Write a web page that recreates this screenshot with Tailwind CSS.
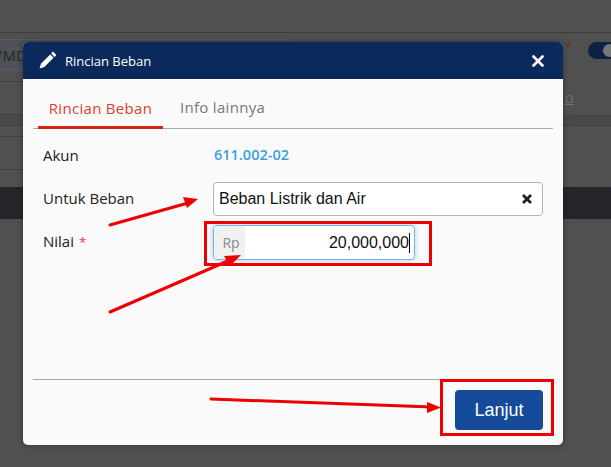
<!DOCTYPE html>
<html lang="id">
<head>
  <meta charset="UTF-8" />
  <title>Rincian Beban</title>
  <script src="https://cdn.jsdelivr.net/npm/@tailwindcss/browser@4"></script>
</head>
<body class="relative w-[611px] h-[467px] overflow-hidden bg-[#4d4d4d] font-['Open_Sans',sans-serif]">

  <!-- Halaman di balik modal -->
  <div class="h-[467px] flex flex-col bg-[#505050]">
    <div class="h-[33px] shrink-0 border-b border-[#3d3d3d]"></div>
    <div class="h-[38px] shrink-0 pt-[6px] flex">
      <div class="w-[293px] h-[32px] border-y border-r border-[#5c5c5c] rounded-tr-[5px] bg-[#4e5158] overflow-hidden">
        <div class="-ml-[6px] text-[15px] leading-[30px] whitespace-nowrap text-[#262626]">YMD</div>
      </div>
      <div class="ml-auto flex items-start pt-[1px]">
        <span class="text-[12px] leading-[16px] text-[#7a2a2a] mr-[16px]">*</span>
        <div class="w-[23px] h-[17px] mt-[2px] bg-[#0c2344] rounded-l-full pl-[15px] pt-[2px] overflow-hidden">
          <div class="w-[13px] h-[13px] rounded-full bg-[#777777]"></div>
        </div>
      </div>
    </div>
    <div class="h-[11px] shrink-0 w-[100px] border-b border-[#3f3f3f]"></div>
    <div class="h-[33px] shrink-0 w-[100px] border-b border-[#3f3f3f]"></div>
    <div class="h-[11px] shrink-0 border-b border-[#3f3f3f] bg-[#484848]"></div>
    <div class="h-[11px] shrink-0 w-[100px] border-b border-[#3f3f3f]"></div>
    <div class="h-[33px] shrink-0 w-[100px] border-b border-[#3f3f3f]"></div>
    <div class="h-[17px] shrink-0"></div>
    <div class="h-[32px] shrink-0 bg-[#25262b]"></div>
  </div>
  <span class="absolute left-[565px] top-[92px] text-[11px] leading-[14px] underline text-[#6a7a88]">O</span>

  <!-- Modal -->
  <div class="absolute left-[23px] top-[42px] w-[540px] h-[403px] bg-[#fafafa] rounded-[5px] overflow-hidden flex flex-col shadow-[0_0_6px_rgba(0,0,0,0.35)]">
    <div class="h-[37px] bg-[#0b2a5b] flex items-center pl-[16px] pr-[19px] text-white">
      <svg class="w-[18px] h-[18px] -mt-[2px]" viewBox="0 0 18 18" fill="#fff"><path d="M14 .6l3.400 3.400-1.900 1.900-3.400-3.400zM11.200 3.400l3.400 3.400-9.300 9.300L.6 17.400l1.300-4.700z"/></svg>
      <span class="ml-[8px] text-[13px] leading-[18px]">Rincian Beban</span>
      <svg class="ml-auto w-[12px] h-[12px]" viewBox="0 0 12 12" stroke="#fff" stroke-width="2.600" stroke-linecap="round"><path d="M1.500 1.500l9 9M10.500 1.500l-9 9"/></svg>
    </div>

    <div class="mx-[10px] h-[50px] flex items-end border-b border-[#ababab] pl-[5px]">
      <div class="w-[125px] h-[34px] -mb-[1px] border-b-[3px] border-[#d9230f] text-center text-[15px] tracking-[0.3px] leading-[26px] text-[#d9402c]">Rincian Beban</div>
      <div class="ml-[17px] h-[34px] text-[15px] tracking-[0.3px] leading-[26px] text-[#777777]">Info lainnya</div>
    </div>

    <div class="px-[20px] pt-[14px] flex-1 text-[15px] text-[#222222]">
      <div class="flex h-[24px] items-center">
        <div class="w-[171px]">Akun</div>
        <div class="font-semibold text-[#3aa0dc] text-[14.500px]">611.002-02</div>
      </div>
      <div class="flex mt-[15px] h-[34px] items-center">
        <div class="w-[170px] -mt-[2px]">Untuk Beban</div>
        <div class="flex-1 h-[34px] border border-[#b5b5b5] bg-white rounded-[4px] flex items-center pl-[5px] pr-[10px] font-['Liberation_Sans',sans-serif] text-[16px] text-[#111111]">
          Beban Listrik dan Air
          <svg class="ml-auto w-[10px] h-[10px]" viewBox="0 0 10 10" stroke="#222" stroke-width="2.800"><path d="M1 1l8 8M9 1l-8 8"/></svg>
        </div>
      </div>
      <div class="flex mt-[9px] h-[35px] items-center">
        <div class="w-[170px] -mt-[2px]">Nilai <span class="text-[13px] ml-[1px] text-[#e53935]">*</span></div>
        <div class="w-[202px] h-[35px] border border-[#7db4e0] bg-white rounded-[4px] shadow-[0_0_5px_rgba(102,175,233,0.6)] flex overflow-hidden">
          <div class="w-[31px] pl-[3px] bg-[#f1f1f1] text-center text-[14px] leading-[33px] text-[#8a8a8a]">Rp</div>
          <div class="flex-1 flex justify-end items-center pr-[4px] font-['Liberation_Sans',sans-serif] text-[16px] text-[#111111]">20,000,000<span class="w-px h-[20px] bg-black"></span></div>
        </div>
      </div>
    </div>

    <div class="mx-[10px] h-[66px] border-t border-[#ababab] flex justify-end items-start pt-[10px] pr-[10px]">
      <button class="w-[88px] h-[40px] bg-[#164a9b] rounded-[4px] text-white text-[18px] font-['Liberation_Sans',sans-serif]">Lanjut</button>
    </div>
  </div>

  <!-- Anotasi merah -->
  <svg class="absolute left-0 top-0" width="611" height="467" viewBox="0 0 611 467" fill="none">
    <g stroke="#ee0000" stroke-width="3">
      <rect x="205.500" y="222.500" width="225" height="42"/>
      <rect x="441.500" y="380.500" width="111" height="54"/>
    </g>
    <g stroke="#ee0000" stroke-width="3" stroke-linecap="round">
      <path d="M110 225L188 203"/>
      <path d="M110 312L230 260"/>
      <path d="M211 399L432 407"/>
    </g>
    <g fill="#ee0000">
      <path d="M198 199L183 197L187 208Z"/>
      <path d="M241 255L224 256L230 266Z"/>
      <path d="M441 407.500L427 402L427 413Z"/>
    </g>
  </svg>
</body>
</html>
